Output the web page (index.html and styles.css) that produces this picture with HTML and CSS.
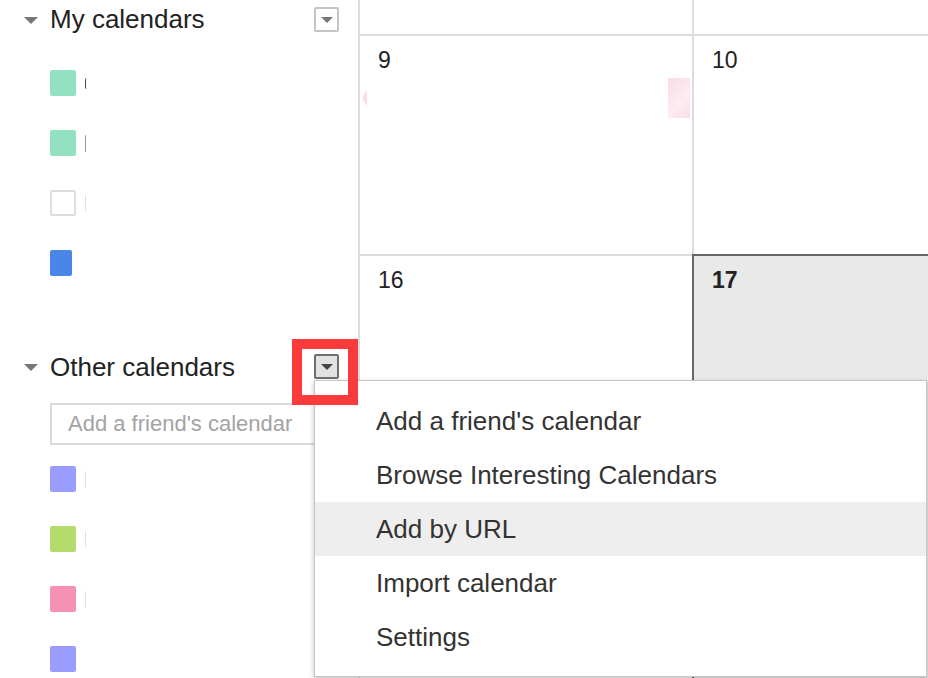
FILE: index.html
```html
<!DOCTYPE html>
<html lang="en">
    <head>
        <meta charset="UTF-8" />
        <meta name="viewport" content="width=device-width, initial-scale=1.0"/>
        <title>Calendar</title>
        <link rel="stylesheet" href="styles.css">
    </head>
    <body>
        <div class="page">
            <aside class="sidebar">
                <div class="section-head">
                    <span class="caret"></span>
                    <span class="section-title">My calendars</span>
                    <span class="drop-btn"><span class="drop-arrow"></span></span>
                </div>
                <ul class="cal-list mine">
                    <li class="cal-item"><span class="swatch green"></span><span class="name-stub dark"></span></li>
                    <li class="cal-item"><span class="swatch green"></span><span class="name-stub mid"></span></li>
                    <li class="cal-item"><span class="swatch empty"></span><span class="name-stub faint"></span></li>
                    <li class="cal-item"><span class="swatch blue"></span></li>
                </ul>
                <div class="section-head other">
                    <span class="caret"></span>
                    <span class="section-title">Other calendars</span>
                    <span class="drop-btn active"><span class="drop-arrow"></span></span>
                </div>
                <div class="friend-field">
                    <input type="text" placeholder="Add a friend's calendar" />
                </div>
                <ul class="cal-list others">
                    <li class="cal-item"><span class="swatch purple"></span><span class="name-stub faint"></span></li>
                    <li class="cal-item"><span class="swatch lime"></span><span class="name-stub faint"></span></li>
                    <li class="cal-item"><span class="swatch pink"></span><span class="name-stub faint"></span></li>
                    <li class="cal-item"><span class="swatch purple"></span></li>
                </ul>
            </aside>
            <main class="month">
                <div class="day top"></div>
                <div class="day top"></div>
                <div class="day">
                    <div class="day-num">9</div>
                    <span class="event-tail"></span>
                    <span class="event-chip"></span>
                </div>
                <div class="day">
                    <div class="day-num">10</div>
                </div>
                <div class="day">
                    <div class="day-num">16</div>
                </div>
                <div class="day today">
                    <div class="day-num">17</div>
                </div>
            </main>
            <ul class="menu">
                <li class="menu-item">Add a friend's calendar</li>
                <li class="menu-item">Browse Interesting Calendars</li>
                <li class="menu-item hover">Add by URL</li>
                <li class="menu-item">Import calendar</li>
                <li class="menu-item">Settings</li>
            </ul>
            <div class="callout"></div>
        </div>
    </body>
</html>
```

FILE: styles.css
```css
body {
    margin: 0;
    font-family: "Liberation Sans", Arial, Helvetica, sans-serif;
    background-color: #fff;
    overflow: hidden;
}
.page {
    position: relative;
    display: flex;
    width: 928px;
    height: 678px;
    overflow: hidden;
}
.sidebar {
    flex: 0 0 358px;
    padding-top: 4px;
    box-sizing: border-box;
}
.section-head {
    display: flex;
    align-items: center;
    height: 30px;
    padding: 0 19px 0 24px;
}
.section-head.other {
    margin-top: 58px;
}
.caret {
    width: 0;
    height: 0;
    border-left: 7px solid transparent;
    border-right: 7px solid transparent;
    border-top: 7px solid #777;
    margin-right: 12px;
    margin-top: 2px;
}
.section-title {
    font-size: 26px;
    line-height: 30px;
    color: #222;
}
.section-head.other .section-title {
    margin-top: 2px;
}
.drop-btn {
    margin-left: auto;
    width: 25px;
    height: 25px;
    box-sizing: border-box;
    border: 2px solid #c4c4c4;
    border-radius: 2px;
    background-color: #fff;
    display: flex;
    justify-content: center;
    align-items: center;
}
.drop-btn.active {
    border-color: #6e6e6e;
    background-color: #e2e2e2;
}
.drop-arrow {
    width: 0;
    height: 0;
    border-left: 6px solid transparent;
    border-right: 6px solid transparent;
    border-top: 6px solid #777;
    margin-top: 1px;
}
.drop-btn.active .drop-arrow {
    border-top-color: #444;
}
.cal-list {
    list-style: none;
    margin: 19px 0 0;
    padding: 0;
}
.cal-list.others {
    margin-top: 4px;
}
.cal-item {
    display: flex;
    align-items: center;
    height: 60px;
    padding-left: 50px;
}
.swatch {
    width: 26px;
    height: 26px;
    border-radius: 2px;
    box-sizing: border-box;
}
.swatch.green {
    background-color: #92e1c0;
}
.swatch.empty {
    background-color: #fff;
    border: 2px solid #ddd;
}
.swatch.blue {
    width: 22px;
    background-color: #4a86e8;
}
.swatch.purple {
    background-color: #9a9cff;
}
.swatch.lime {
    background-color: #b3dc6c;
}
.swatch.pink {
    background-color: #f691b2;
}
.name-stub {
    width: 2px;
    height: 17px;
    margin-left: 9px;
    border-radius: 1px;
}
.name-stub.dark {
    height: 11px;
    width: 2px;
    border-left: 1px solid #444;
    border-radius: 6px 0 0 6px;
    box-sizing: border-box;
}
.name-stub.mid {
    background-color: #9a9a9a;
    width: 1px;
}
.name-stub.faint {
    background-color: #e2e2e2;
    width: 1px;
}
.friend-field {
    margin: 22px 0 0 50px;
}
.friend-field input {
    width: 290px;
    height: 42px;
    box-sizing: border-box;
    border: 2px solid #dadada;
    padding: 0 0 0 16px;
    font-family: "Liberation Sans", Arial, sans-serif;
    font-size: 22px;
    color: #333;
    outline: none;
}
.friend-field input::placeholder {
    color: #a3a3a3;
}
.month {
    flex: 1;
    display: grid;
    grid-template-columns: 334px 1fr;
    grid-template-rows: 34px 220px 1fr;
}
.day {
    position: relative;
    box-sizing: border-box;
    border-left: 2px solid #dcdcdc;
    border-top: 2px solid #dcdcdc;
}
.day.top {
    border-top: none;
}
.day-num {
    padding: 11px 0 0 18px;
    font-size: 23px;
    color: #222;
}
.day.today {
    background-color: #e9e9e9;
    border-color: #666;
}
.day.today .day-num {
    font-weight: bold;
}
.event-tail {
    position: absolute;
    left: 2px;
    top: 54px;
    width: 0;
    height: 0;
    border-top: 8px solid transparent;
    border-bottom: 8px solid transparent;
    border-right: 5px solid #f9dde8;
}
.event-chip {
    position: absolute;
    left: 308px;
    top: 42px;
    width: 22px;
    height: 40px;
    background: linear-gradient(135deg, #f9dbe6 0%, #fdecf2 60%, #f9dde8 100%);
}
.menu {
    position: absolute;
    left: 314px;
    top: 380px;
    width: 613px;
    height: 297px;
    box-sizing: border-box;
    margin: 0;
    padding: 13px 0 12px;
    list-style: none;
    background-color: #fff;
    border: 1px solid #c6c6c6;
    box-shadow: 0 2px 5px rgba(0, 0, 0, 0.25);
}
.menu-item {
    height: 54px;
    line-height: 54px;
    padding-left: 61px;
    font-size: 26px;
    color: #333;
}
.menu-item.hover {
    background-color: #eee;
}
.callout {
    position: absolute;
    left: 292px;
    top: 339px;
    width: 66px;
    height: 66px;
    box-sizing: border-box;
    border: 10px solid #fb3b3b;
}
```
